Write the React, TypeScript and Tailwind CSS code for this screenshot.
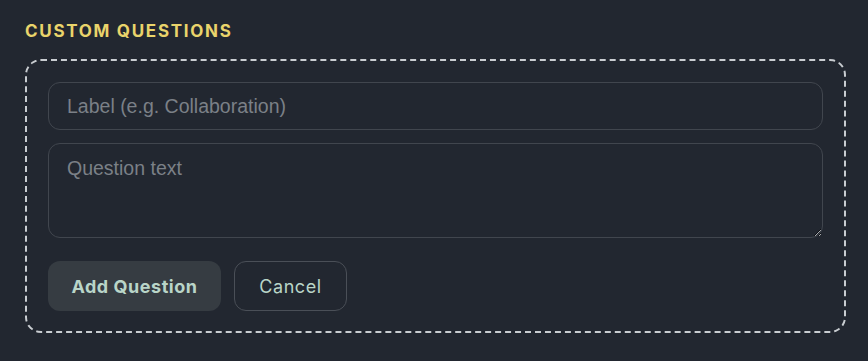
export default function App() {
  return (
    <div className="min-h-[361px] w-full bg-[#222730] pl-[25px] pr-[22px] pt-[21px] font-['Liberation_Sans',Arial,sans-serif]">
      <h2 className="mb-[18px] font-['Inter',sans-serif] text-[17px] font-bold uppercase leading-[20px] tracking-[0.1em] text-[#ead46b]">
        Custom Questions
      </h2>
      <div className="rounded-[16px] border-2 border-dashed border-[#c9cdd1] px-[21px] pt-[21px] pb-[20px]">
        <input
          placeholder="Label (e.g. Collaboration)"
          className="block h-[48px] w-full rounded-[12px] border border-[#41464e] bg-transparent px-[18px] text-[19.5px] text-[#d0d4d8] placeholder:text-[#7b8087] outline-none"
        />
        <textarea
          placeholder="Question text"
          className="mt-[13px] block h-[95px] w-full rounded-[12px] border border-[#41464e] bg-transparent px-[18px] py-[12px] text-[19.5px] leading-[24px] text-[#d0d4d8] placeholder:text-[#7b8087] outline-none"
        />
        <div className="mt-[23px] flex gap-[13px]">
          <button className="h-[50px] w-[173px] rounded-[12px] bg-[#363c42] font-['Inter',sans-serif] text-[18px] font-bold tracking-[0.03em] text-[#b9d5c8]">
            Add Question
          </button>
          <button className="h-[50px] w-[113px] rounded-[12px] border border-[#4a4f57] font-['Inter',sans-serif] text-[18px] tracking-[0.03em] text-[#b9d5c8]">
            Cancel
          </button>
        </div>
      </div>
    </div>
  );
}
